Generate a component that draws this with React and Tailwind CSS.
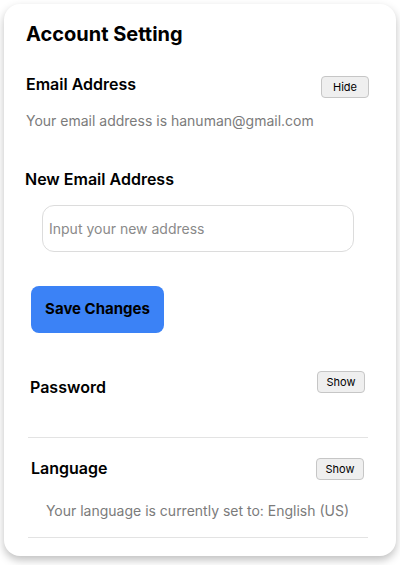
export default function App() {
  const btn =
    "h-[22px] w-[48px] rounded-[4px] border border-[#c6c6c6] bg-[#efefef] text-[11px] text-black";

  return (
    <main
      className="min-h-screen bg-white pt-1"
      style={{ fontFamily: "Inter, 'Noto Sans', sans-serif" }}
    >
      <div className="mx-1 w-[392px] rounded-2xl bg-white pb-[18px] pl-[22px] pr-[27px] pt-4 shadow-[0_4px_8px_rgba(0,0,0,0.25)]">
        <h1 className="text-xl leading-7 font-bold text-black">Account Setting</h1>

        {/* email */}
        <div className="mt-6 flex items-start justify-between">
          <h2 className="text-base leading-6 font-semibold text-black">Email Address</h2>
          <button className={btn + " mt-1"}>Hide</button>
        </div>
        <p className="mt-[13px] text-sm leading-5 text-[#7b7b7b]">
          Your email address is hanuman@gmail.com
        </p>

        <h2 className="-ml-px mt-9 text-base leading-6 font-semibold text-black">
          New Email Address
        </h2>
        <input
          type="text"
          placeholder="Input your new address"
          className="ml-4 mt-[14px] h-[47px] w-[312px] rounded-xl border border-[#dcdcdc] px-[6px] text-sm text-black placeholder:text-[#8a8a8a] outline-none"
        />

        <button className="ml-[5px] mt-[34px] block h-[47px] w-[133px] rounded-lg bg-[#3b82f6] text-[15px] font-bold text-black">
          Save Changes
        </button>

        {/* password */}
        <div className="mx-1 mt-[38px] flex items-start justify-between">
          <h2 className="mt-1 text-base leading-6 font-semibold text-black">Password</h2>
          <button className={btn}>Show</button>
        </div>
        <div className="ml-[2px] mr-px mt-[38px] h-px bg-[#e3e3e3]" />

        {/* language */}
        <div className="mx-[5px] mt-[18px] flex items-start justify-between">
          <h2 className="text-base leading-6 font-semibold text-black">Language</h2>
          <button className={btn + " mt-[2px]"}>Show</button>
        </div>
        <p className="mt-[21px] text-center text-sm leading-5 text-[#7b7b7b]">
          Your language is currently set to: English (US)
        </p>
        <div className="ml-[2px] mr-px mt-[16px] h-px bg-[#e3e3e3]" />
      </div>
    </main>
  );
}
